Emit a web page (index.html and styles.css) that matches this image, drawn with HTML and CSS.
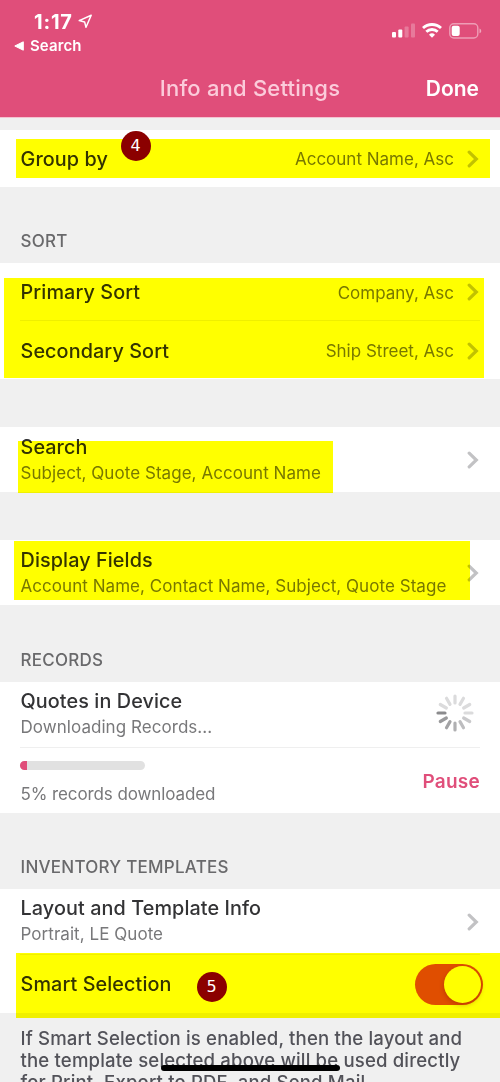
FILE: index.html
```html
<!DOCTYPE html>
<html lang="en">
<head>
<meta charset="utf-8">
<title>Info and Settings</title>
<link rel="stylesheet" href="styles.css">
</head>
<body>
<svg class="defs" aria-hidden="true">
  <symbol id="chevron" viewBox="0 0 12 18"><path d="M2.2 2.2 9.3 9l-7.1 6.8" fill="none" stroke="currentColor" stroke-width="3.2" stroke-linecap="round" stroke-linejoin="miter"/></symbol>
</svg>
<div class="screen">
  <header class="header">
    <div class="status">
      <div class="status-left">
        <div class="clock"><span class="time">1:17</span>
          <svg class="location" viewBox="0 0 15 15"><path d="M13.2 1.2 1.2 6.6l5.4 1.3 1.4 5.4z" fill="none" stroke="#fff" stroke-width="1.5" stroke-linejoin="round"/></svg>
        </div>
        <div class="back">
          <svg class="back-arrow" viewBox="0 0 10 10"><path d="M9.3 .8v8.4L.8 5z" fill="#fff" stroke="#fff" stroke-width="1" stroke-linejoin="round"/></svg>
          <span>Search</span>
        </div>
      </div>
      <div class="status-right">
        <svg class="signal" viewBox="0 0 23 15"><g fill="#fff"><rect x="0" y="9" width="4" height="5.5" rx="1"/><rect x="6.3" y="6.5" width="4" height="8" rx="1"/><g opacity=".25"><rect x="12.6" y="3.5" width="4" height="11" rx="1"/><rect x="19" y="0.5" width="4" height="14" rx="1"/></g></g></svg>
        <svg class="wifi" viewBox="0 0 20 15"><g fill="none" stroke="#fff" stroke-width="2.8"><path d="M1 5.1a13 13 0 0 1 18 0"/><path d="M4.3 8.8a8.2 8.2 0 0 1 11.4 0"/></g><path d="M10 14.8l-3-3.1a4.3 4.3 0 0 1 6 0z" fill="#fff"/></svg>
        <svg class="battery" viewBox="0 0 33 16"><rect x=".8" y=".8" width="28" height="14.2" rx="4" fill="none" stroke="#fff" stroke-opacity=".45" stroke-width="1.4"/><rect x="2.7" y="2.7" width="8" height="10.4" rx="2" fill="#fff"/><path d="M30.5 5.5c2.3.8 2.3 4 0 4.8z" fill="#fff" fill-opacity=".5"/></svg>
      </div>
    </div>
    <div class="nav">
      <span class="nav-title">Info and Settings</span>
      <span class="done">Done</span>
    </div>
  </header>

  <section class="card card-group">
    <div class="row"><span class="title">Group by</span><span class="value">Account Name, Asc</span><svg class="chevron"><use href="#chevron"/></svg></div>
  </section>

  <h2 class="heading">SORT</h2>
  <section class="card card-sort">
    <div class="row row-primary"><span class="title">Primary Sort</span><span class="value">Company, Asc</span><svg class="chevron"><use href="#chevron"/></svg></div>
    <div class="row row-secondary"><span class="title">Secondary Sort</span><span class="value">Ship Street, Asc</span><svg class="chevron"><use href="#chevron"/></svg></div>
  </section>

  <section class="card card-search">
    <div class="stack"><span class="title">Search</span><span class="detail">Subject, Quote Stage, Account Name</span></div>
    <svg class="chevron"><use href="#chevron"/></svg>
  </section>

  <section class="card card-fields">
    <div class="stack"><span class="title">Display Fields</span><span class="detail">Account Name, Contact Name, Subject, Quote Stage</span></div>
    <svg class="chevron"><use href="#chevron"/></svg>
  </section>

  <h2 class="heading">RECORDS</h2>
  <section class="card card-records">
    <div class="device">
      <div class="stack"><span class="title">Quotes in Device</span><span class="detail">Downloading Records...</span></div>
      <svg class="spinner" viewBox="-19 -19 38 38" stroke-width="3.2" stroke-linecap="round">
        <path d="M-10-0h-7" stroke="#8b8b8d"/>
        <path d="M-10 0h-7" stroke="#9a9a9c" transform="rotate(-30)"/>
        <path d="M-10 0h-7" stroke="#a3a3a5" transform="rotate(-60)"/>
        <path d="M-10 0h-7" stroke="#b0b0b2" transform="rotate(-90)"/>
        <path d="M-10 0h-7" stroke="#bdbdbf" transform="rotate(-120)"/>
        <path d="M-10 0h-7" stroke="#c9c9cb" transform="rotate(-150)"/>
        <g stroke="#dbdbdc"><path d="M10 0h7"/><path d="M10 0h7" transform="rotate(-30)"/><path d="M10 0h7" transform="rotate(-60)"/><path d="M10 0h7" transform="rotate(-90)"/><path d="M10 0h7" transform="rotate(-120)"/><path d="M10 0h7" transform="rotate(-150)"/></g>
      </svg>
    </div>
    <div class="download">
      <div class="progress-group"><div class="progress"><div class="progress-fill"></div></div><span class="detail detail-progress">5% records downloaded</span></div>
      <span class="pause">Pause</span>
    </div>
  </section>

  <h2 class="heading">INVENTORY TEMPLATES</h2>
  <section class="card card-templates">
    <div class="layout-row">
      <div class="stack"><span class="title">Layout and Template Info</span><span class="detail">Portrait, LE Quote</span></div>
      <svg class="chevron"><use href="#chevron"/></svg>
    </div>
    <div class="smart-row"><span class="title">Smart Selection</span><span class="switch"><span class="knob"></span></span></div>
  </section>
  <p class="note">If Smart Selection is enabled, then the layout and<br>the template selected above will be used directly<br>for Print, Export to PDF, and Send Mail.</p>

  <div class="mark mark-group"></div>
  <div class="mark mark-sort"></div>
  <div class="mark mark-search"></div>
  <div class="mark mark-fields"></div>
  <div class="mark mark-smart"></div>
  <div class="badge badge-four">4</div>
  <div class="badge badge-five">5</div>
  <div class="home-bar"></div>
</div>
</body>
</html>
```
FILE: styles.css
```css
* { box-sizing: border-box; }
body { margin: 0; font-family: Inter, "Liberation Sans", sans-serif; }
.defs { position: absolute; width: 0; height: 0; }
.screen { position: relative; width: 500px; height: 1082px; overflow: hidden; background: #f0f0f0; color: #333335; }
svg { flex: none; }
span { white-space: nowrap; }

.header { height: 118px; background: #e04e7a; border-bottom: 1px solid #f4c3d1; color: #fff; margin-bottom: 12px; }
.status { display: flex; justify-content: space-between; height: 64px; padding: 9px 18px 0 14px; }
.clock { display: flex; align-items: center; gap: 5px; height: 24px; padding-left: 20px; }
.time { padding-top: 1px; font-size: 20px; font-weight: 700; letter-spacing: .8px; }
.location { width: 15px; height: 15px; }
.back { display: flex; align-items: center; gap: 6px; height: 25px; font-size: 15px; font-weight: 600; letter-spacing: .1px; }
.back-arrow { width: 10px; height: 10px; }
.status-right { display: flex; align-items: flex-start; padding-top: 14px; }
.signal { width: 23px; height: 15px; margin-right: 7px; }
.wifi { width: 20px; height: 15px; margin-right: 7px; }
.battery { width: 33px; height: 16px; }
.nav { display: grid; grid-template-columns: 1fr auto 1fr; align-items: center; height: 48px; padding: 0 21px; }
.nav-title { grid-column: 2; font-size: 22px; font-weight: 500; letter-spacing: .2px; color: #fbcbda; }
.done { justify-self: end; font-size: 21px; font-weight: 600; }

.card { background: #fff; padding: 0 20px; }
.row { display: flex; align-items: center; }
.title { padding-left: .5px; font-size: 19.8px; font-weight: 500; line-height: 26px; letter-spacing: .1px; }
.value { margin-left: auto; padding-top: 1px; font-size: 17px; line-height: 24px; letter-spacing: 0; color: #78787a; }
.detail { padding-left: .5px; font-size: 17px; line-height: 25px; letter-spacing: .05px; color: #78787a; }
.chevron { width: 12px; height: 18px; margin: 0 1px 0 13px; color: #c2c2c4; }
.stack { display: flex; flex-direction: column; padding-top: 1px; }
.stack .detail { padding-top: 1px; }
.heading { display: flex; align-items: center; height: 76px; margin: 0; padding: 32px 20.5px 0; font-size: 17px; font-weight: 500; letter-spacing: .25px; color: #69696b; }

.card-group .row { height: 57px; }
.card-sort { height: 116px; }
.row-primary { height: 58px; padding-top: 1px; border-bottom: 1px solid #efefef; }
.row-secondary { height: 58px; padding-top: 1px; }
.card-search, .card-fields { display: flex; align-items: center; justify-content: space-between; height: 65px; margin-top: 48px; }
.card-fields { margin-bottom: 1px; }
.card-records { height: 131px; }
.device { display: flex; align-items: center; justify-content: space-between; height: 66px; padding-right: 6px; border-bottom: 1px solid #efefef; }
.device .stack, .layout-row .stack { padding: 0 0 1px; }
.spinner { width: 38px; height: 38px; margin-bottom: 3px; }
.download { display: flex; justify-content: space-between; align-items: center; height: 65px; padding-top: 3px; }
.progress-group { display: flex; flex-direction: column; gap: 12px; padding-top: 3px; }
.progress { width: 125px; height: 9px; overflow: hidden; border-radius: 5px; background: #e1e1e1; }
.progress-fill { width: 7px; height: 9px; background: #e04e7a; }
.detail-progress { letter-spacing: -.1px; }
.pause { padding-bottom: 2px; font-size: 19px; font-weight: 600; letter-spacing: .25px; color: #e04e7a; }
.layout-row { display: flex; align-items: center; justify-content: space-between; height: 66px; border-bottom: 1px solid #efefef; }
.smart-row { display: flex; align-items: center; justify-content: space-between; height: 58px; }
.card-templates { height: 124px; }
.switch { display: flex; align-items: center; justify-content: flex-end; width: 68px; height: 41px; margin-right: -3px; padding: 2px; border-radius: 21px; background: #e04e7a; }
.knob { width: 37px; height: 37px; border-radius: 50%; background: #fff; box-shadow: 0 2px 5px rgba(80, 0, 0, .25); }
.note { margin: 0; padding: 14px 20.5px 0; font-size: 18.6px; font-weight: 500; line-height: 22px; letter-spacing: .15px; color: #525259; white-space: nowrap; }

/* Highlighter marks lie over the rows and tint everything below them. */
.mark { position: absolute; background: #ff0; mix-blend-mode: multiply; }
.mark-group { left: 16px; top: 139px; width: 474px; height: 39px; }
.mark-sort { left: 4px; top: 278px; width: 480px; height: 100px; }
.mark-search { left: 18px; top: 441px; width: 315px; height: 52px; }
.mark-fields { left: 14px; top: 541px; width: 456px; height: 59px; }
.mark-smart { left: 16px; top: 953px; width: 484px; height: 65px; }
.badge { position: absolute; width: 30px; height: 30px; border-radius: 50%; background: #8b0000; color: #fff; font: 16px/30px "DejaVu Sans", sans-serif; text-align: center; }
.badge-four { left: 120.5px; top: 131px; }
.badge-five { left: 196.5px; top: 971.5px; }
.home-bar { position: absolute; left: 161px; top: 1065px; width: 179px; height: 6px; border-radius: 3px; background: #000; }
```
